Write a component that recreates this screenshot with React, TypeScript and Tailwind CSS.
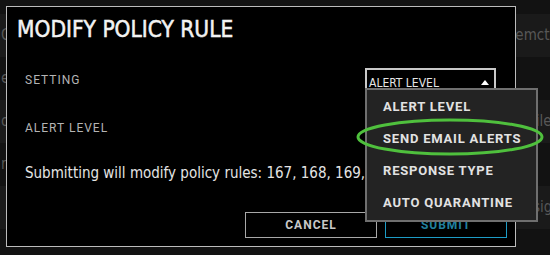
const rows = [
  { left: 'copy', mid: 'Detects execution of subsystem on the system', right: '', pad: 'pl-[3px]' },
  { left: 'Custom', mid: 'Detects use of the service manager', right: 'systemctl', pad: 'pl-[3px]' },
  { left: 'expert', mid: 'Detects shell spawned by web server', right: '', pad: 'pl-[3px]' },
  { left: 'outbound', mid: 'Detects write to sensitive file', right: 'file', pad: 'pl-[46px]' },
  { left: 'network', mid: 'Detects unexpected network listener', right: '', pad: 'pl-[3px]' },
  { left: '', mid: 'Detects kernel module load', right: 'sig', pad: 'pl-[48px]' },
  { left: '', mid: '', right: '', pad: 'pl-[3px]' },
];

const options = ['ALERT LEVEL', 'SEND EMAIL ALERTS', 'RESPONSE TYPE', 'AUTO QUARANTINE'];

const narrow = { fontFamily: '"DejaVu Sans Condensed", "Liberation Sans Narrow", "Liberation Sans", sans-serif' };
const heading = { fontFamily: 'Roboto, "Liberation Sans", sans-serif' };

export default function App() {
  return (
    <div className="relative h-[255px] w-[550px] overflow-hidden bg-[#121212]">
      {/* table behind the dialog */}
      <div className="-mt-[29px] flex flex-col" style={narrow}>
        {rows.map((r, i) => (
          <div
            key={i}
            className={`flex h-[43px] items-center text-[15px] text-[#575757] ${i % 2 ? 'bg-[#1a1a1a]' : 'bg-[#121212]'}`}
          >
            <span className="w-[147px] shrink-0 pl-[1px]">{r.left}</span>
            <span className="w-[338px] shrink-0 truncate">{r.mid}</span>
            <span className={`whitespace-nowrap ${r.pad}`}>{r.right}</span>
          </div>
        ))}
      </div>

      {/* dialog */}
      <div className="absolute left-[6px] top-[6px] flex h-[241px] w-[510px] flex-col border border-[#bcbcbc] bg-black pl-[10px] pr-[8px]">
        <h1
          className="mt-[7px] text-[22.5px] leading-[30px] text-[#f2f2f2] [-webkit-text-stroke:0.5px_#f2f2f2]"
          style={narrow}
        >
          MODIFY POLICY RULE
        </h1>

        <div className="mt-[24px] flex items-start pl-[8px]">
          <span className="mt-[4px] w-[340px] text-[12px] leading-[16px] tracking-[1px] text-[#b4b4b4]" style={heading}>
            SETTING
          </span>
          <div className="flex h-[22px] w-[131px] items-end justify-between border-2 border-b-0 border-[#c9c9c9] pl-[2px] pr-[5px]">
            <span className="text-[12px] leading-[14px] text-[#e6e6e6]" style={narrow}>
              ALERT LEVEL
            </span>
            <span className="mb-[5px] h-0 w-0 border-x-[4px] border-b-[5px] border-x-transparent border-b-white" />
          </div>
        </div>

        <span className="mt-[30px] pl-[8px] text-[12px] leading-[16px] tracking-[1px] text-[#b4b4b4]" style={heading}>
          ALERT LEVEL
        </span>

        <p className="mt-[27px] whitespace-nowrap pl-[8px] text-[15px] leading-[20px] text-[#e4e4e4]" style={narrow}>
          Submitting will modify policy rules: 167, 168, 169, 170, 171
        </p>

        <div className="mt-auto mb-[8px] flex justify-end gap-[8px]">
          <button className="h-[26px] w-[132px] border border-[#a8a8a8] text-[12px] font-bold tracking-[1px] text-[#c8c8c8]" style={heading}>
            CANCEL
          </button>
          <button className="h-[26px] w-[122px] border border-[#1d9cc6] text-[12px] font-bold tracking-[1px] text-[#22809f]" style={heading}>
            SUBMIT
          </button>
        </div>
      </div>

      {/* open select menu */}
      <div className="absolute left-[365px] top-[88px] flex w-[173px] flex-col border-2 border-[#6f6f6f] bg-[#232323] py-[1px]">
        {options.map(o => (
          <div
            key={o}
            className="flex h-[32px] items-center pl-[16px] text-[13px] font-bold tracking-[0.8px] text-[#e2e2e2]"
            style={heading}
          >
            {o}
          </div>
        ))}
      </div>

      {/* annotation */}
      <svg className="pointer-events-none absolute left-0 top-0" width="550" height="255">
        <ellipse cx="450" cy="137" rx="92" ry="17" fill="none" stroke="#4fc03d" strokeWidth="3" />
      </svg>
    </div>
  );
}
